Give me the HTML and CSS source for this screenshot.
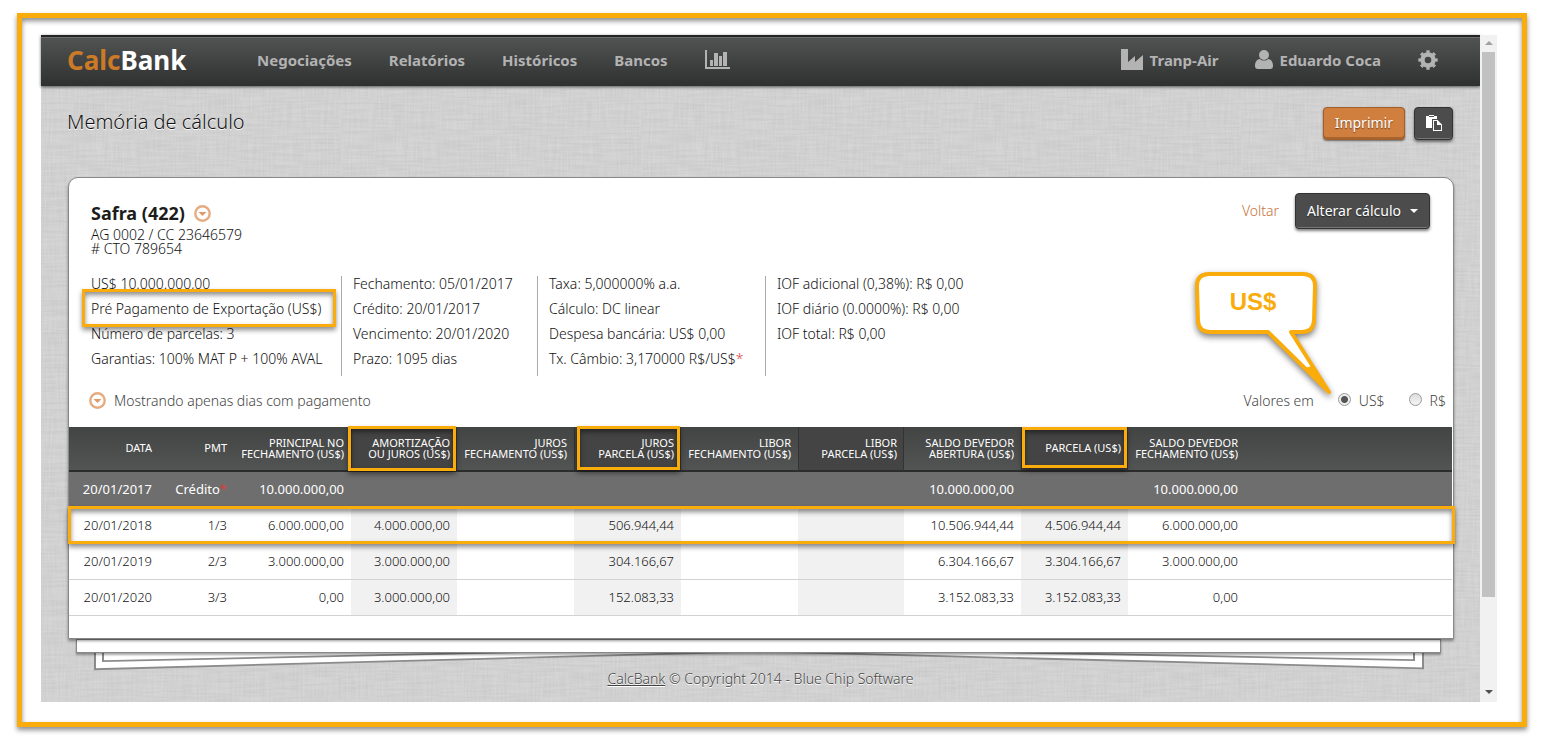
FILE: index.html
```html
<!DOCTYPE html>
<html lang="pt-BR">
<head>
<meta charset="utf-8">
<title>CalcBank - Memória de cálculo</title>
<link rel="stylesheet" href="styles.css">
</head>
<body>
<div class="frame mark">
<div class="window">
<div class="app">
<header class="topbar">
  <a class="logo" href="#"><span class="logo-accent">Calc</span>Bank</a>
  <nav class="menu">
    <a href="#">Negociações</a>
    <a href="#">Relatórios</a>
    <a href="#">Históricos</a>
    <a href="#">Bancos</a>
    <a href="#" aria-label="Gráficos"><svg class="icon" width="25" height="20" viewBox="0 0 25 20"><path d="M0 0h2v17h23v2H0zM5 10h3v6H5zM9 3h4v13H9zM14 6h3v10h-3zM18 2h4v14h-4z"/></svg></a>
  </nav>
  <nav class="menu menu-user">
    <a href="#"><svg class="icon" width="23" height="22" viewBox="0 0 23 22"><path d="M0 0h7v13l7-6v6l8-7v15H0z"/></svg>Tranp-Air</a>
    <a href="#"><svg class="icon" width="18" height="20" viewBox="0 0 18 20"><circle cx="9" cy="5" r="5"/><path d="M5 9c2 2 6 2 8 0 3 0 5 3 5 7 0 2-1 3-3 3H3c-2 0-3-1-3-3 0-4 2-7 5-7z"/></svg>Eduardo Coca</a>
    <a href="#" aria-label="Configurações"><svg width="20" height="20" viewBox="0 0 20 20" fill="none" stroke="#b3b3b3"><circle cx="10" cy="10" r="5.500" stroke-width="4.400"/><circle cx="10" cy="10" r="8" stroke-width="3.400" pathLength="16" stroke-dasharray="1 1" stroke-dashoffset=".5"/></svg></a>
  </nav>
</header>

<main class="page">
  <div class="page-head">
    <h1>Memória de cálculo</h1>
    <button class="btn btn-primary" type="button">Imprimir</button>
    <button class="btn btn-icon" type="button" aria-label="Copiar"><svg width="16" height="16" viewBox="0 0 16 16"><path fill="#fff" fill-rule="evenodd" d="M0 1h3V0h5v1h3v3H6v9H0zM3 1v1h5V1zM7 5h4.500L16 9.500V16H7zM8 6v9h7v-5h-4V6z"/></svg></button>
  </div>

  <section class="card">
    <div class="card-head">
      <div class="bank">
        <h2>Safra (422)<button class="toggle" type="button" aria-label="Abrir banco"><svg width="17" height="17" viewBox="0 0 17 17"><circle cx="8.500" cy="8.500" r="7.200" fill="none" stroke="#e5ac82" stroke-width="2.400"/><path d="M4.500 7h8l-4 4z" fill="#e09a68"/></svg></button></h2>
        <p>AG 0002 / CC 23646579<br># CTO 789654</p>
      </div>
      <a class="back" href="#">Voltar</a>
      <button class="btn btn-large" type="button">Alterar cálculo<span class="caret"></span></button>
    </div>

    <div class="info">
      <ul>
        <li>US$ 10.000.000,00</li>
        <li class="marked"><span class="mark mark-product"></span>Pré Pagamento de Exportação (US$)</li>
        <li>Número de parcelas: 3</li>
        <li>Garantias: 100% MAT P + 100% AVAL</li>
      </ul>
      <ul>
        <li>Fechamento: 05/01/2017</li>
        <li>Crédito: 20/01/2017</li>
        <li>Vencimento: 20/01/2020</li>
        <li>Prazo: 1095 dias</li>
      </ul>
      <ul>
        <li>Taxa: 5,000000% a.a.</li>
        <li>Cálculo: DC linear</li>
        <li>Despesa bancária: US$ 0,00</li>
        <li>Tx. Câmbio: 3,170000 R$/US$<span class="note">*</span></li>
      </ul>
      <ul>
        <li>IOF adicional (0,38%): R$ 0,00</li>
        <li>IOF diário (0.0000%): R$ 0,00</li>
        <li>IOF total: R$ 0,00</li>
      </ul>
    </div>

    <div class="filters">
      <button class="toggle" type="button" aria-label="Filtrar dias"><svg width="17" height="17" viewBox="0 0 17 17"><circle cx="8.500" cy="8.500" r="7.200" fill="none" stroke="#e5ac82" stroke-width="2.400"/><path d="M4.500 7h8l-4 4z" fill="#e09a68"/></svg></button>
      <span class="filter-text">Mostrando apenas dias com pagamento</span>
      <span>Valores em</span>
      <label class="choice"><input type="radio" name="moeda" checked>US$</label>
      <label class="choice"><input type="radio" name="moeda">R$</label>
      <div class="callout">
        <svg width="150" height="136" viewBox="0 0 150 136"><path d="M16 4H110Q122 4 122 16L121 51Q120 62 109 62H98L136 122L75 62H17Q6 62 5 51L4 16Q4 4 16 4Z" fill="#fff" stroke="#f9ac0b" stroke-width="4" stroke-linejoin="round"/><path d="M119 96L137 123L112 98Z" fill="#f9ac0b"/></svg>
        <strong>US$</strong>
      </div>
    </div>

    <table class="schedule">
      <colgroup>
        <col class="c-date"><col class="c-pmt"><col class="c-wide"><col class="c-narrow"><col class="c-wide"><col class="c-mid"><col class="c-wide"><col class="c-narrow"><col class="c-wide"><col class="c-mid"><col class="c-wide"><col>
      </colgroup>
      <thead>
        <tr>
          <th>Data</th>
          <th>PMT</th>
          <th>Principal no<br>fechamento (US$)</th>
          <th class="alt">Amortização<br>ou juros (US$)<span class="mark mark-amort"></span></th>
          <th>Juros<br>fechamento (US$)</th>
          <th class="alt">Juros<br>parcela (US$)<span class="mark mark-interest"></span></th>
          <th>Libor<br>fechamento (US$)</th>
          <th class="alt">Libor<br>parcela (US$)</th>
          <th>Saldo devedor<br>abertura (US$)</th>
          <th class="alt">Parcela (US$)<span class="mark mark-payment"></span></th>
          <th>Saldo devedor<br>fechamento (US$)</th>
          <th></th>
        </tr>
      </thead>
      <tbody>
        <tr class="credit"><td>20/01/2017</td><td>Crédito<span class="note">*</span></td><td>10.000.000,00</td><td></td><td></td><td></td><td></td><td></td><td>10.000.000,00</td><td></td><td>10.000.000,00</td><td></td></tr>
        <tr class="selected"><td>20/01/2018<span class="mark mark-row"></span></td><td>1/3</td><td>6.000.000,00</td><td class="alt">4.000.000,00</td><td></td><td class="alt">506.944,44</td><td></td><td class="alt"></td><td>10.506.944,44</td><td class="alt">4.506.944,44</td><td>6.000.000,00</td><td></td></tr>
        <tr><td>20/01/2019</td><td>2/3</td><td>3.000.000,00</td><td class="alt">3.000.000,00</td><td></td><td class="alt">304.166,67</td><td></td><td class="alt"></td><td>6.304.166,67</td><td class="alt">3.304.166,67</td><td>3.000.000,00</td><td></td></tr>
        <tr><td>20/01/2020</td><td>3/3</td><td>0,00</td><td class="alt">3.000.000,00</td><td></td><td class="alt">152.083,33</td><td></td><td class="alt"></td><td>3.152.083,33</td><td class="alt">3.152.083,33</td><td>0,00</td><td></td></tr>
      </tbody>
    </table>
  </section>

  <div class="sheet"></div>
  <svg class="sheets" viewBox="0 0 1330 20" preserveAspectRatio="none" aria-hidden="true">
    <g fill="#fff" stroke="#8b8b8b" stroke-width="2">
      <path d="M1-4V18L640-1V-4zM1329-4V17L690-1V-4z"/>
      <path d="M9-4V9L430-1V-4zM1320-4V8L900-1V-4z"/>
    </g>
  </svg>
  <footer class="footer"><a href="#">CalcBank</a> © Copyright 2014 - Blue Chip Software</footer>
</main>
</div>
<div class="scrollbar" aria-hidden="true">
  <span class="arrow arrow-up"></span>
  <span class="thumb"></span>
  <span class="arrow arrow-down"></span>
</div>
</div>
</div>
</body>
</html>
```
FILE: styles.css
```css
* { box-sizing: border-box; }

body {
  margin: 0;
  padding: 13px 15px 15px 17px;
  background: #fff;
  color: #111;
  font-family: "Noto Sans", "Open Sans", sans-serif;
  font-size: 14px;
  font-weight: 300;
}

h1, h2, p, ul { margin: 0; padding: 0; }
a { color: inherit; text-decoration: none; }

.mark {
  border: 3px solid #f9ac0b;
  box-shadow: 0 3px 5px rgba(0, 0, 0, .45), inset 0 3px 5px rgba(0, 0, 0, .45);
}

.frame {
  padding: 17px 25px 20px 19px;
  border-width: 5px;
}

.window {
  display: grid;
  grid-template-columns: 1fr 17px;
}

/* Linen texture: fine noise stretched along each axis */
.app {
  background-color: #d2d2d2;
  background-image:
    url("data:image/svg+xml,%3Csvg xmlns='http://www.w3.org/2000/svg' width='300' height='300'%3E%3Cfilter id='a'%3E%3CfeTurbulence type='fractalNoise' baseFrequency='.5 .03' numOctaves='2' stitchTiles='stitch'/%3E%3CfeColorMatrix values='0 0 0 0 1 0 0 0 0 1 0 0 0 0 1 .25 0 0 0 -.07'/%3E%3C/filter%3E%3Crect width='300' height='300' filter='url(%23a)'/%3E%3C/svg%3E"),
    url("data:image/svg+xml,%3Csvg xmlns='http://www.w3.org/2000/svg' width='300' height='300'%3E%3Cfilter id='a'%3E%3CfeTurbulence type='fractalNoise' baseFrequency='.03 .5' numOctaves='2' stitchTiles='stitch'/%3E%3CfeColorMatrix values='0 0 0 0 0 0 0 0 0 0 0 0 0 0 0 .08 0 0 0 -.02'/%3E%3C/filter%3E%3Crect width='300' height='300' filter='url(%23a)'/%3E%3C/svg%3E");
}

/* Top bar */
.topbar {
  display: flex;
  align-items: center;
  height: 51px;
  padding: 0 42px 3px 26px;
  border-top: 2px solid #232525;
  background: linear-gradient(#525453, #2f3030);
  box-shadow: inset 0 1px #6c6e6d, 0 1px 3px rgba(0, 0, 0, .6);
  color: #b3b3b3;
  font-size: 15px;
  font-weight: 700;
}

.logo {
  width: 190px;
  color: #fff;
  font-size: 26px;
  line-height: 32px;
}

.logo-accent { color: #cd7a27; }

.menu {
  display: flex;
  align-items: center;
  gap: 37px;
}

.menu a {
  display: flex;
  align-items: center;
  gap: 6px;
}

.menu-user { margin-left: auto; }
.icon { fill: #b3b3b3; }

/* Page heading */
.page { padding: 21px 26px 15px; }

.page-head {
  display: flex;
  align-items: center;
  gap: 9px;
  margin: 0 1px 37px 0;
}

h1 {
  flex: 1;
  padding-bottom: 3px;
  color: #111;
  font-size: 20px;
  font-weight: 300;
  line-height: 30px;
  text-shadow: 0 1px #fff;
}

.btn {
  height: 33px;
  padding: 0 11px 2px;
  border: 1px solid #333;
  border-radius: 4px;
  background: #4c4c4c;
  box-shadow: inset 0 -1px #777, 0 2px 3px rgba(0, 0, 0, .5);
  color: #fff;
  font: inherit;
  font-weight: 400;
  text-shadow: 0 1px 1px rgba(0, 0, 0, .5);
}

.btn-primary {
  border-color: #a05f2b;
  background: #d17f3e;
  box-shadow: inset 0 -2px #a8632e, 0 1px 2px rgba(0, 0, 0, .5);
}

.btn-icon { width: 39px; }
.btn-icon svg { display: block; }
.btn-large { height: 36px; }

.caret {
  display: inline-block;
  margin: 0 0 3px 9px;
  border: 4px solid transparent;
  border-top-color: #fff;
  border-bottom-width: 0;
}

/* Card */
.card {
  position: relative;
  z-index: 2;
  margin-left: 1px;
  padding: 15px 1px 22px 0;
  border: 1px solid #888;
  border-radius: 10px 10px 0 0;
  background: #fff;
  box-shadow: 0 2px 3px rgba(0, 0, 0, .4);
}

.card-head {
  display: flex;
  align-items: flex-start;
  padding: 0 22px;
}

.bank { flex: 1; padding-top: 9px; }

h2 {
  display: flex;
  align-items: center;
  gap: 9px;
  margin-bottom: 4px;
  color: #1c1c1c;
  font-size: 18px;
  line-height: 22px;
}

.bank p { line-height: 14px; }

.toggle {
  padding: 0;
  border: 0;
  background: none;
}

.toggle svg { display: block; }

.back {
  margin-right: 16px;
  color: #c8733a;
  line-height: 36px;
}

.info {
  display: grid;
  grid-template-columns: 250px 196px 228px 1fr;
  margin-top: 20px;
  padding-left: 22px;
}

.info ul {
  display: flex;
  flex-direction: column;
  gap: 9px;
  padding: 0 0 9px 11px;
  border-left: 1px solid #aaa;
  line-height: 16px;
  list-style: none;
  white-space: nowrap;
}

.info ul:first-child { padding-left: 0; border-left: 0; }
.note { color: #e03c3c; }
.marked { position: relative; }
.mark-product { position: absolute; inset: -12px auto -10px -9px; width: 254px; }

/* Filters above the schedule */
.filters {
  position: relative;
  display: flex;
  align-items: center;
  height: 51px;
  padding: 0 6px 2px 20px;
  color: #444;
}

.filter-text { flex: 1; margin-left: 8px; }
.choice { display: flex; align-items: center; margin-left: 24px; }

.choice input {
  appearance: none;
  width: 13px;
  height: 13px;
  margin: 0 8px 2px 0;
  border: 1px solid #999;
  border-radius: 50%;
  background: linear-gradient(#ddd, #f4f4f4);
}

.choice input:checked { background: radial-gradient(circle, #555 0 3px, #eee 4px); }

.callout {
  position: absolute;
  right: -3px;
  bottom: 21px;
  width: 262px;
  height: 136px;
  pointer-events: none;
}

.callout svg { display: block; filter: drop-shadow(0 3px 3px rgba(0, 0, 0, .5)); }

.callout strong {
  position: absolute;
  top: 18px;
  left: 0;
  width: 120px;
  color: #f9ac0b;
  font: 700 24px/28px "Liberation Sans", Arial, sans-serif;
  text-align: center;
}

/* Payment schedule */
.schedule {
  width: 100%;
  border-collapse: separate;
  border-spacing: 0;
  table-layout: fixed;
  text-align: right;
}

.c-date { width: 90px; }
.c-pmt { width: 75px; }
.c-wide { width: 117px; }
.c-mid { width: 107px; }
.c-narrow { width: 106px; }

.schedule th {
  position: relative;
  height: 45px;
  padding: 0 7px 2px 0;
  border-bottom: 2px solid #2c2c2c;
  color: #fff;
  font-size: 11px;
  font-weight: 400;
  line-height: 11px;
  text-transform: uppercase;
  white-space: nowrap;
}

.schedule thead tr { background: linear-gradient(#434544, #535554); }
.schedule th.alt { border-left: 1px solid #333; border-right: 1px solid #333; background: #444; padding-right: 6px; }

.schedule td {
  height: 36px;
  padding: 0 7px 2px 0;
  border-bottom: 1px solid #d2d2d2;
  font-size: 13px;
}

.schedule td.alt { background: #f1f1f1; }
.credit { background: #6e6e6e; color: #fff; font-weight: 400; }
.schedule .credit td { border-color: #6e6e6e; }
.selected { position: relative; }

.mark-amort, .mark-interest, .mark-payment, .mark-row { position: absolute; z-index: 1; }
.mark-amort { inset: -1px 0 -1px -4px; }
.mark-interest { inset: -1px 0 0 2px; }
.mark-payment { inset: 0 0 2px 0; }
.mark-row { inset: -2px -3px 0 -1px; }

/* Paper stack */
.sheet {
  position: relative;
  z-index: 1;
  height: 14px;
  margin: 0 13px 0 9px;
  border: 1px solid #888;
  background: #fff;
  box-shadow: 0 2px 2px rgba(0, 0, 0, .35);
}

.sheets {
  display: block;
  width: calc(100% - 57px);
  height: 18px;
  margin-left: 27px;
}

.footer {
  color: #444;
  line-height: 16px;
  text-align: center;
  text-shadow: 0 1px #fff;
}

.footer a { text-decoration: underline; }

/* Scrollbar */
.scrollbar {
  display: flex;
  flex-direction: column;
  align-items: center;
  background: #f1f1f1;
}

.arrow { border: 4px solid transparent; }
.arrow-up { margin: 6px 0 7px; border-top: 0; border-bottom-color: #a0a0a0; }
.arrow-down { margin: 0 0 8px; border-bottom: 0; border-top-color: #505050; }

.thumb {
  flex: 0 1 545px;
  width: 13px;
  margin-bottom: auto;
  background: #c1c1c1;
}
```
